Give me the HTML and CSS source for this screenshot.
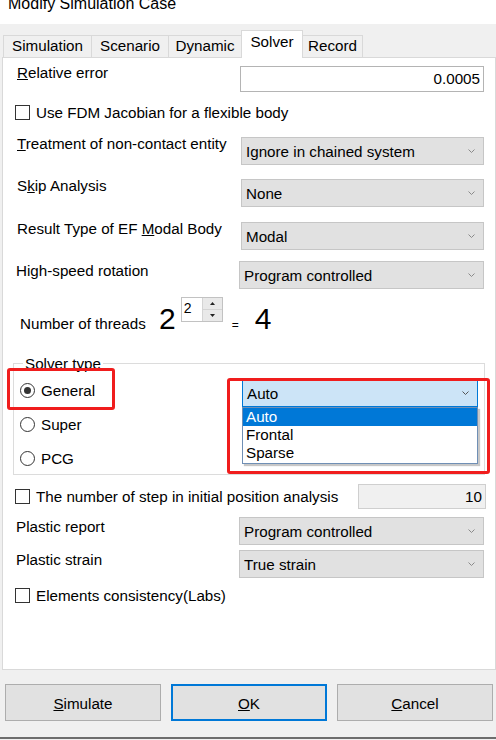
FILE: index.html
```html
<!DOCTYPE html>
<html lang="en">
<head>
    <meta charset="UTF-8">
    <title>Modify Simulation Case</title>
    <link rel="stylesheet" href="styles.css">
</head>
<body>
<div class="dialog">
    <div class="titlebar"><div class="title">Modify Simulation Case</div></div>

    <div class="tabs">
        <div class="tab t-sim">Simulation</div>
        <div class="tab t-scn">Scenario</div>
        <div class="tab t-dyn">Dynamic</div>
        <div class="tab t-sol active">Solver</div>
        <div class="tab t-rec">Record</div>
    </div>

    <div class="panel">
        <div class="field r-rel">
            <label><u>R</u>elative error</label>
            <div class="textbox">0.0005</div>
        </div>

        <div class="check r-fdm"><span class="box"></span>Use FDM Jacobian for a flexible body</div>

        <div class="field r-treat">
            <label><u>T</u>reatment of non-contact entity</label>
            <div class="combo"><span>Ignore in chained system</span><svg class="chev" width="7" height="4" viewBox="0 0 7 4"><polyline points="0.5,0.5 3.5,3.5 6.5,0.5"/></svg></div>
        </div>

        <div class="field r-skip">
            <label>S<u>k</u>ip Analysis</label>
            <div class="combo"><span>None</span><svg class="chev" width="7" height="4" viewBox="0 0 7 4"><polyline points="0.5,0.5 3.5,3.5 6.5,0.5"/></svg></div>
        </div>

        <div class="field r-result">
            <label>Result Type of EF <u>M</u>odal Body</label>
            <div class="combo"><span>Modal</span><svg class="chev" width="7" height="4" viewBox="0 0 7 4"><polyline points="0.5,0.5 3.5,3.5 6.5,0.5"/></svg></div>
        </div>

        <div class="field low r-speed">
            <label>High-speed rotation</label>
            <div class="combo"><span>Program controlled</span><svg class="chev" width="7" height="4" viewBox="0 0 7 4"><polyline points="0.5,0.5 3.5,3.5 6.5,0.5"/></svg></div>
        </div>

        <div class="threads">
            <span class="th-label">Number of threads</span>
            <span class="big">2</span>
            <div class="spin">
                <span class="spin-val">2</span>
                <div class="spin-btns">
                    <span class="spin-up"><svg width="5" height="3" viewBox="0 0 5 3"><polygon points="2.5,0 5,3 0,3"/></svg></span>
                    <span class="spin-down"><svg width="5" height="3" viewBox="0 0 5 3"><polygon points="0,0 5,0 2.5,3"/></svg></span>
                </div>
            </div>
            <span class="eq">=</span>
            <span class="big four">4</span>
        </div>

        <fieldset class="solver">
            <legend>Solver type</legend>
            <div class="radios">
                <div class="radio"><span class="dot on"></span>General</div>
                <div class="radio"><span class="dot"></span>Super</div>
                <div class="radio"><span class="dot"></span>PCG</div>
            </div>
            <div class="combo-wrap">
                <div class="combo focus"><span>Auto</span><svg class="chev" width="7" height="4" viewBox="0 0 7 4"><polyline points="0.5,0.5 3.5,3.5 6.5,0.5"/></svg></div>
                <ul class="droplist">
                    <li class="sel">Auto</li>
                    <li>Frontal</li>
                    <li>Sparse</li>
                </ul>
            </div>
        </fieldset>

        <div class="check r-step">
            <span class="box"></span>The number of step in initial position analysis
            <div class="textbox off">10</div>
        </div>

        <div class="field low r-prep">
            <label>Plastic report</label>
            <div class="combo"><span>Program controlled</span><svg class="chev" width="7" height="4" viewBox="0 0 7 4"><polyline points="0.5,0.5 3.5,3.5 6.5,0.5"/></svg></div>
        </div>

        <div class="field low r-pstr">
            <label>Plastic strain</label>
            <div class="combo"><span>True strain</span><svg class="chev" width="7" height="4" viewBox="0 0 7 4"><polyline points="0.5,0.5 3.5,3.5 6.5,0.5"/></svg></div>
        </div>

        <div class="check r-elem"><span class="box"></span>Elements consistency(Labs)</div>

        <!-- marcas rojas de la captura -->
        <div class="mark mark-general"></div>
        <div class="mark mark-combo"></div>
    </div>

    <div class="buttons">
        <div class="btn"><span><u>S</u>imulate</span></div>
        <div class="btn default"><span><u>O</u>K</span></div>
        <div class="btn"><span><u>C</u>ancel</span></div>
    </div>
    <div class="bottomline"></div>
</div>
</body>
</html>
```

FILE: styles.css
```css
* {
    box-sizing: border-box;
}

body {
    margin: 0;
    font-family: "Liberation Sans", Arial, sans-serif;
    font-size: 15.2px;
    color: #000;
}

.dialog {
    width: 496px;
    height: 740px;
    background-color: #f0f0f0;
    display: flex;
    flex-direction: column;
    overflow: hidden;
}

.titlebar {
    height: 24px;
    background-color: #fff;
    overflow: hidden;
    padding-left: 8px;
}

.title {
    font-size: 16px;
    line-height: 18px;
    margin-top: -5px;
}

/* pestañas */
.tabs {
    display: flex;
    align-items: flex-end;
    height: 27px;
    margin-top: 6px;
    padding-left: 3px;
    position: relative;
    z-index: 1;
}

.tab {
    height: 22px;
    border: 1px solid #d9d9d9;
    border-bottom: none;
    margin-left: -1px;
    padding-top: 1px;
    line-height: 17px;
    text-align: center;
    background-color: #f0f0f0;
}

.tab:first-child {
    margin-left: 0;
}

.tab.active {
    height: 28px;
    margin-bottom: -1px;
    padding-top: 2px;
    background-color: #fff;
}

.t-sim { width: 89px; }
.t-scn { width: 78px; }
.t-dyn { width: 74px; }
.t-sol { width: 62px; }
.t-rec { width: 61px; }

/* panel blanco */
.panel {
    position: relative;
    height: 613px;
    margin-left: 2px;
    background-color: #fff;
    border: 1px solid #d9d9d9;
    padding: 0 10px 0 14px;
}

.field {
    display: flex;
    align-items: flex-start;
}

.field label {
    width: 224px;
    margin-top: -2px;
    line-height: 17px;
}

.field.low label {
    width: 223px;
    margin-left: -1px;
    margin-top: 1px;
}

.textbox {
    width: 244px;
    height: 26px;
    margin-left: -1px;
    border: 1px solid #b4b4b4;
    background-color: #fff;
    text-align: right;
    padding-right: 3px;
    line-height: 24px;
}

.textbox.off {
    width: 128px;
    height: 25px;
    line-height: 23px;
    margin-left: auto;
    margin-right: -1px;
    background-color: #f0f0f0;
    border-color: #cfcfcf;
}

.combo {
    display: flex;
    align-items: center;
    justify-content: space-between;
    width: 243px;
    height: 28px;
    border: 1px solid #c6c6c6;
    background-color: #e1e1e1;
    padding: 0 8px 0 4px;
    white-space: nowrap;
}

.field.low .combo {
    width: 245px;
}

.chev polyline {
    fill: none;
    stroke: #8a8a8a;
    stroke-width: 1;
}

.combo.focus {
    width: 236px;
    background-color: #cce4f7;
    border-color: #0078d7;
}

.combo.focus .chev polyline {
    stroke: #555;
}

.check {
    display: flex;
    align-items: center;
    height: 17px;
    margin-left: -2px;
}

.box {
    width: 15px;
    height: 15px;
    border: 1px solid #333;
    background-color: #fff;
    margin-right: 6px;
    flex-shrink: 0;
}

.r-rel { margin-top: 8px; }
.r-fdm { margin-top: 12px; }
.r-treat { margin-top: 16px; }
.r-skip { margin-top: 14px; }
.r-result { margin-top: 15px; }
.r-speed { margin-top: 11px; }

/* número de hilos */
.threads {
    display: flex;
    align-items: flex-start;
    margin-top: 8px;
    height: 37px;
}

.th-label {
    width: 139px;
    margin-left: 3px;
    margin-top: 18px;
    line-height: 17px;
}

.big {
    font-size: 30px;
    line-height: 30px;
    margin-top: 7px;
}

.four {
    margin-left: 16px;
}

.spin {
    display: flex;
    width: 42px;
    height: 25px;
    margin-left: 5px;
    border: 1px solid #c2c2c2;
    background-color: #fff;
}

.spin-val {
    flex: 1;
    font-size: 14px;
    line-height: 16px;
    padding: 2px 0 0 2px;
}

.spin-btns {
    width: 20px;
    display: flex;
    flex-direction: column;
    border-left: 1px solid #d4d4d4;
}

.spin-btns span {
    flex: 1;
    display: flex;
    align-items: center;
    justify-content: center;
    background-color: #e9e9e9;
}

.spin-btns .spin-up {
    border-bottom: 1px solid #d4d4d4;
}

.spin-btns polygon {
    fill: #222;
}

.eq {
    font-size: 12px;
    margin-left: 9px;
    margin-top: 21px;
    line-height: 14px;
}

/* tipo de solver */
.solver {
    display: grid;
    grid-template-columns: 222px 236px;
    width: 472px;
    margin: 21px 0 0 -4px;
    padding: 0 0 7px 6px;
    border: 1px solid #dcdcdc;
}

.solver legend {
    margin-left: 3px;
    padding: 0 2px;
    line-height: 17px;
}

.radios {
    display: flex;
    flex-direction: column;
    gap: 17px;
    margin-top: 10px;
}

.radio {
    display: flex;
    align-items: center;
    height: 17px;
}

.dot {
    width: 15px;
    height: 15px;
    border: 1px solid #333;
    border-radius: 50%;
    background-color: #fff;
    margin-right: 6px;
    display: flex;
    align-items: center;
    justify-content: center;
}

.dot.on::after {
    content: "";
    width: 7px;
    height: 7px;
    border-radius: 50%;
    background-color: #333;
}

.combo-wrap {
    position: relative;
    margin-top: 7px;
    align-self: start;
}

.droplist {
    position: absolute;
    left: 0;
    top: 100%;
    width: 236px;
    margin: 0;
    padding: 0 0 1px 0;
    list-style: none;
    background-color: #fff;
    border: 1px solid #6f8fb5;
    box-shadow: 2px 2px 1px rgba(0, 0, 0, 0.22);
    z-index: 2;
}

.droplist li {
    height: 18px;
    line-height: 18px;
    padding-left: 3px;
}

.droplist li.sel {
    background-color: #0078d7;
    color: #fff;
}

.r-step {
    height: 25px;
    margin-top: 9px;
}

.r-prep { margin-top: 8px; }
.r-pstr { margin-top: 5px; }
.r-elem { margin-top: 9px; }

/* recuadros rojos */
.mark {
    position: absolute;
    border: 3px solid #f01d1d;
    border-radius: 3px;
    z-index: 3;
}

.mark-general {
    left: 4px;
    top: 310px;
    width: 108px;
    height: 42px;
}

.mark-combo {
    left: 224px;
    top: 320px;
    width: 263px;
    height: 96px;
}

/* botones */
.buttons {
    display: flex;
    gap: 10px;
    padding-left: 5px;
    margin-top: 14px;
}

.btn {
    width: 156px;
    height: 37px;
    border: 1px solid #adadad;
    background-color: #e1e1e1;
    display: flex;
    align-items: center;
    justify-content: center;
    padding-top: 2px;
}

.btn.default {
    border: 2px solid #0078d7;
}

.bottomline {
    height: 2px;
    margin-top: 16px;
    background-color: #6d6d6d;
}
```
